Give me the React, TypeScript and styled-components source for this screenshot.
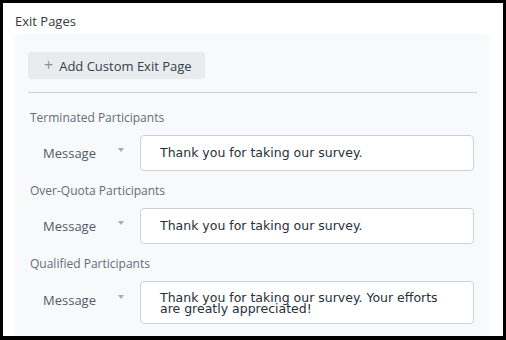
import styled, { createGlobalStyle } from 'styled-components'

const GlobalStyle = createGlobalStyle`
  html, body {
    margin: 0;
    padding: 0;
    background: #000;
  }
  * {
    box-sizing: border-box;
  }
`

let Frame = styled.div`
  width: 506px;
  height: 340px;
  border: 3px solid #000;
  border-bottom-width: 4px;
  background: #fff;
  padding: 9px 14px 0 12px;
  overflow: hidden;
  font-family: "Open Sans", "Liberation Sans", sans-serif;
`

let Title = styled.div`
  font-size: 13px;
  line-height: 18px;
  color: #353a40;
  margin-bottom: 4px;
`

let Panel = styled.div`
  background: #f8f9fb;
  border-radius: 4px 4px 0 0;
  padding: 18px 12px 20px 13px;
`

let AddButton = styled.button`
  display: flex;
  align-items: center;
  gap: 6px;
  height: 27px;
  width: 177px;
  padding: 0 0 0 16px;
  border: none;
  border-radius: 3px;
  background: #e9ecef;
  color: #363e48;
  font-family: "Open Sans", "Liberation Sans", sans-serif;
  font-size: 13px;
  cursor: pointer;

  span {
    color: #8a9199;
    font-size: 16px;
    line-height: 1;
    margin-top: -1px;
  }
`

let Divider = styled.hr`
  border: none;
  border-top: 1px solid #cdd1d4;
  margin: 13px 0 0;
`

let Section = styled.div<{ first?: boolean }>`
  margin-top: ${p => (p.first ? '15px' : '10px')};
`

let SectionLabel = styled.div`
  font-size: 12px;
  line-height: 20px;
  color: #646c75;
  padding-left: 2px;
  margin-bottom: 7px;
`

let Row = styled.div`
  display: flex;
  align-items: flex-start;
`

let Select = styled.div<{ tall?: boolean }>`
  width: 112px;
  flex: none;
  display: flex;
  align-items: center;
  padding: ${p => (p.tall ? '9px' : '8px')} 0 0 15px;
  font-size: 13px;
  line-height: 20px;
  color: #535b64;
`

let Caret = styled.i`
  width: 0;
  height: 0;
  margin-left: 22px;
  margin-top: -6px;
  border-left: 3.5px solid transparent;
  border-right: 3.5px solid transparent;
  border-top: 4px solid #a6abb0;
`

let fieldCss = `
  flex: 1;
  margin-right: 3px;
  border: 1px solid #cdd1d5;
  border-radius: 4px;
  background: #fff;
  color: #26303c;
  font-family: "DejaVu Sans", Verdana, sans-serif;
  font-size: 12.5px;
  outline: none;
  padding-left: 19px;
  padding-right: 12px;
`

let TextInput = styled.input`
  ${fieldCss}
  height: 36px;
  padding-bottom: 3px;
`

let TextArea = styled.textarea`
  ${fieldCss}
  height: 43px;
  resize: none;
  line-height: 11px;
  padding-top: 10px;
  padding-bottom: 0;
  overflow: hidden;
`

const exitPages = [
  { label: 'Terminated Participants', text: 'Thank you for taking our survey.', multi: false },
  { label: 'Over-Quota Participants', text: 'Thank you for taking our survey.', multi: false },
  {
    label: 'Qualified Participants',
    text: 'Thank you for taking our survey. Your efforts are greatly appreciated!',
    multi: true,
  },
]

function App() {
  return (
    <>
      <GlobalStyle />
      <Frame>
        <Title>Exit Pages</Title>
        <Panel>
          <AddButton>
            <span>+</span>Add Custom Exit Page
          </AddButton>
          <Divider />
          {exitPages.map((page, i) => (
            <Section key={page.label} first={i === 0}>
              <SectionLabel>{page.label}</SectionLabel>
              <Row>
                <Select tall={page.multi}>
                  Message
                  <Caret />
                </Select>
                {page.multi ? (
                  <TextArea readOnly defaultValue={page.text} />
                ) : (
                  <TextInput readOnly defaultValue={page.text} />
                )}
              </Row>
            </Section>
          ))}
        </Panel>
      </Frame>
    </>
  )
}

export default App
